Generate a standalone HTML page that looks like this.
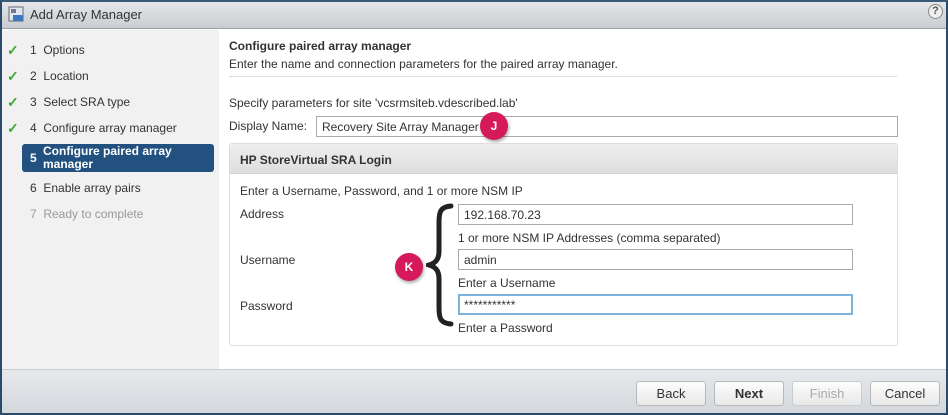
<!DOCTYPE html>
<html><head><style>
*{margin:0;padding:0;box-sizing:border-box}
body{width:948px;height:415px;overflow:hidden;font-family:"Liberation Sans",Arial,sans-serif;font-size:12px;color:#333;background:#fff;position:relative}
.frame{position:absolute;inset:0;border:2px solid #2a4a6a;border-top-color:#3a5a7a}
.a{position:absolute;white-space:nowrap}
.title{left:2px;top:2px;width:944px;height:27px;background:linear-gradient(#e4e6e8,#c9cdd1);border-bottom:1px solid #9aa0a6}
.side{left:2px;top:30px;width:217px;height:339px;background:#f1f1f1}
.foot{left:2px;top:369px;width:944px;height:44px;background:linear-gradient(#e6e9ec,#d3d8dc);border-top:1px solid #c8ccd0}
.step{font-size:12px;color:#333}
.chk{color:#3aa935;font-weight:bold;font-size:14px}
.inp{position:absolute;border:1px solid #aaa;background:#fff;height:21px;padding:3px 5px;font-size:12px}
.btn{position:absolute;top:381px;height:25px;border:1px solid #b8b8b8;border-radius:3px;background:linear-gradient(#fdfdfd,#e8e8e8);text-align:center;line-height:23px;font-size:13px;color:#333}
.badge{position:absolute;width:28px;height:28px;border-radius:50%;background:#d6195a;color:#fff;font-weight:bold;text-align:center;line-height:28px;font-size:12px;box-shadow:1px 2px 3px rgba(0,0,0,.35)}
</style></head><body>
<div class="a title"></div>
<svg class="a" style="left:8px;top:6px" width="16" height="16" viewBox="0 0 16 16"><rect x="1" y="1" width="14" height="14" fill="#dfe6ee" stroke="#667"/><rect x="3" y="3" width="5" height="4" fill="#778"/><rect x="5" y="9" width="10" height="6" fill="#3b78c0"/></svg>
<div class="a" style="left:30px;top:7px;font-size:13px;color:#333">Add Array Manager</div>
<div class="a" style="left:928px;top:4px;width:15px;height:15px;border-radius:50%;border:1px solid #888;background:#eee;font-size:11px;font-weight:bold;text-align:center;line-height:13px;color:#555">?</div>
<div class="a side"></div>
<div class="a chk" style="left:7px;top:42px">✓</div><div class="a step" style="left:30px;top:43px">1 &nbsp;Options</div>
<div class="a chk" style="left:7px;top:68px">✓</div><div class="a step" style="left:30px;top:69px">2 &nbsp;Location</div>
<div class="a chk" style="left:7px;top:94px">✓</div><div class="a step" style="left:30px;top:95px">3 &nbsp;Select SRA type</div>
<div class="a chk" style="left:7px;top:120px">✓</div><div class="a step" style="left:30px;top:121px">4 &nbsp;Configure array manager</div>
<div class="a" style="left:22px;top:144px;width:192px;height:28px;background:#22517f;border-radius:3px;color:#fff;font-weight:bold;font-size:12px">
<span style="position:absolute;left:8px;top:7px">5</span><span style="position:absolute;left:21px;top:1px;line-height:13px">Configure paired array<br>manager</span></div>
<div class="a step" style="left:30px;top:181px">6 &nbsp;Enable array pairs</div>
<div class="a step" style="left:30px;top:207px;color:#999">7 &nbsp;Ready to complete</div>
<div class="a" style="left:229px;top:39px;font-weight:bold">Configure paired array manager</div>
<div class="a" style="left:229px;top:57px">Enter the name and connection parameters for the paired array manager.</div>
<div class="a" style="left:229px;top:76px;width:668px;border-top:1px solid #ddd"></div>
<div class="a" style="left:229px;top:96px">Specify parameters for site 'vcsrmsiteb.vdescribed.lab'</div>
<div class="a" style="left:229px;top:119px">Display Name:</div>
<div class="inp" style="left:316px;top:116px;width:582px">Recovery Site Array Manager</div>
<div class="badge" style="left:480px;top:112px">J</div>
<div class="a" style="left:229px;top:143px;width:669px;height:203px;border:1px solid #ddd;border-radius:3px"></div>
<div class="a" style="left:230px;top:144px;width:667px;height:30px;background:linear-gradient(#eeeeee,#dedede);border-bottom:1px solid #d0d0d0"></div>
<div class="a" style="left:240px;top:153px;font-weight:bold">HP StoreVirtual SRA Login</div>
<div class="a" style="left:240px;top:184px">Enter a Username, Password, and 1 or more NSM IP</div>
<div class="a" style="left:240px;top:207px">Address</div>
<div class="a" style="left:240px;top:253px">Username</div>
<div class="a" style="left:240px;top:299px">Password</div>
<div class="inp" style="left:458px;top:204px;width:395px">192.168.70.23</div>
<div class="a" style="left:458px;top:231px">1 or more NSM IP Addresses (comma separated)</div>
<div class="inp" style="left:458px;top:249px;width:395px">admin</div>
<div class="a" style="left:458px;top:276px">Enter a Username</div>
<div class="inp" style="left:458px;top:294px;width:395px;border:2px solid #7fb2d8;padding:2px 4px">***********</div>
<div class="a" style="left:458px;top:321px">Enter a Password</div>
<svg class="a" style="left:426px;top:203px" width="28" height="124" viewBox="0 0 28 124"><path d="M25 3 C14 4 13 9 13 20 L13 48 C13 56 10 60 3 62 C10 64 13 68 13 76 L13 104 C13 115 14 120 25 121" fill="none" stroke="#222" stroke-width="5" stroke-linecap="round"/></svg>
<div class="badge" style="left:395px;top:253px">K</div>
<div class="a foot"></div>
<div class="btn" style="left:636px;width:70px">Back</div>
<div class="btn" style="left:714px;width:70px;font-weight:bold">Next</div>
<div class="btn" style="left:792px;width:70px;color:#aaa;border-color:#ccc">Finish</div>
<div class="btn" style="left:870px;width:70px">Cancel</div>
<div class="frame"></div>
</body></html>
